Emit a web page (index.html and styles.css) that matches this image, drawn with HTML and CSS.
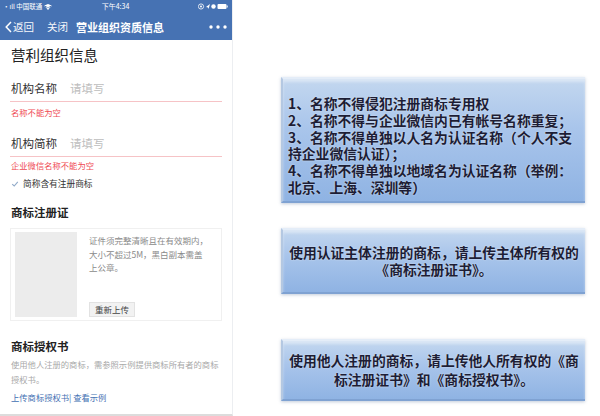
FILE: index.html
```html
<!DOCTYPE html>
<html lang="zh-CN">
<head>
    <meta charset="UTF-8">
    <meta name="viewport" content="width=device-width, initial-scale=1.0">
    <title>营业组织资质信息</title>
<link rel="stylesheet" href="styles.css">
</head>
<body>
    <div class="phone">
        <div class="header">
            <div class="status">
                <span class="carrier">•ıll 中国联通 <svg width="8" height="6" viewBox="0 0 8 6"><path d="M0.5 2 Q4 -1 7.5 2 M1.8 3.3 Q4 1.4 6.2 3.3 M4 5.5 L3 4.4 Q4 3.6 5 4.4 Z" stroke="#fff" stroke-width="0.9" fill="#fff"/></svg></span>
                <span class="clock">下午4:34</span>
                <span class="icons">
                    <svg width="30" height="7" viewBox="0 0 30 7">
                        <circle cx="3" cy="3.5" r="2.6" stroke="#fff" stroke-width="0.8" fill="none"/>
                        <circle cx="3" cy="3.5" r="1" fill="#fff"/>
                        <path d="M8 4 L12 1 L10.5 6 L10 4.5 Z" fill="#fff"/>
                        <circle cx="15.5" cy="3.5" r="2.2" fill="#fff"/>
                        <rect x="19.5" y="1" width="9" height="5" rx="1" fill="#fff"/>
                        <rect x="28.7" y="2.5" width="1" height="2" fill="#fff"/>
                    </svg>
                </span>
            </div>
            <div class="nav">
                <svg class="back" width="7" height="12" viewBox="0 0 7 12"><path d="M6 1 L1.2 6 L6 11" stroke="#fff" stroke-width="1.5" fill="none"/></svg>
                <span class="nav-link">返回</span>
                <span class="nav-link close">关闭</span>
                <span class="nav-title">营业组织资质信息</span>
                <svg class="more" width="18" height="4" viewBox="0 0 18 4"><circle cx="2" cy="2" r="1.7" fill="#fff"/><circle cx="9" cy="2" r="1.7" fill="#fff"/><circle cx="16" cy="2" r="1.7" fill="#fff"/></svg>
            </div>
        </div>

        <div class="page">
            <div class="page-title">营利组织信息</div>

            <div class="field first">
                <span class="field-label">机构名称</span>
                <span class="placeholder">请填写</span>
            </div>
            <div class="error e1">名称不能为空</div>

            <div class="field second">
                <span class="field-label">机构简称</span>
                <span class="placeholder">请填写</span>
            </div>
            <div class="error e2">企业微信名称不能为空</div>

            <div class="check-row">
                <svg width="8" height="8" viewBox="0 0 8 8"><path d="M1.2 4.2 L3.2 6 L6.8 1.8" stroke="#8fa9c8" stroke-width="1.1" fill="none"/></svg>
                <span>简称含有注册商标</span>
            </div>

            <div class="section-title s1">商标注册证</div>
            <div class="upload-card">
                <div class="upload-img"></div>
                <div class="upload-info">
                    <p class="upload-tip">证件须完整清晰且在有效期内，大小不超过5M，黑白副本需盖上公章。</p>
                    <span class="upload-btn">重新上传</span>
                </div>
            </div>

            <div class="section-title s2">商标授权书</div>
            <p class="desc">使用他人注册的商标，需参照示例提供商标所有者的商标授权书。</p>
            <div class="links"><span>上传商标授权书</span>| <span>查看示例</span></div>
        </div>
    </div>

    <div class="notes">
        <div class="note note-list">
            1、名称不得侵犯注册商标专用权<br>
            2、名称不得与企业微信内已有帐号名称重复；<br>
            3、名称不得单独以人名为认证名称（个人不支持企业微信认证）；<br>
            4、名称不得单独以地域名为认证名称（举例：北京、上海、深圳等）
        </div>
        <div class="note note-two">使用认证主体注册的商标，请上传主体所有权的《商标注册证书》。</div>
        <div class="note note-three">使用他人注册的商标，请上传他人所有权的《商标注册证书》和《商标授权书》。</div>
    </div>
</body>
</html>
```

FILE: styles.css
```css
body {
    margin: 0;
    padding: 0;
    width: 600px;
    height: 416px;
    overflow: hidden;
    display: flex;
    background-color: #fff;
    font-family: "Noto Sans CJK SC", "Noto Sans", sans-serif;
}

.phone {
    width: 232px;
    height: 414px;
    flex-shrink: 0;
    background-color: #fff;
    border-right: 1px solid #eceef1;
    border-bottom: 2px solid #dcdcdc;
}

.header {
    height: 40px;
    background-color: #4672b3;
    color: #fff;
}

.status {
    height: 13px;
    display: flex;
    justify-content: space-between;
    align-items: center;
    padding: 0 4px 0 3px;
    font-size: 6.5px;
    line-height: 13px;
}
.status .carrier {
    width: 70px;
    display: flex;
    align-items: center;
    gap: 2px;
}
.status .clock {
    font-size: 7px;
}
.status .icons {
    width: 70px;
    display: flex;
    justify-content: flex-end;
}

.nav {
    height: 27px;
    display: flex;
    align-items: center;
    padding: 0 5px 0 5px;
    font-size: 10.5px;
}
.nav .back {
    margin-right: 1px;
}
.nav-link {
    opacity: 0.95;
}
.nav-link.close {
    margin-left: 13px;
}
.nav-title {
    margin-left: 8px;
    font-size: 11px;
    font-weight: 700;
}
.more {
    margin-left: auto;
}

.page {
    padding: 0 10px;
}

.page-title {
    margin-top: 5px;
    line-height: 20px;
    font-size: 14.5px;
    color: #222;
    padding-left: 1px;
}

.field {
    padding: 15px 0 5px 1px;
    line-height: 16px;
    font-size: 11.5px;
    border-bottom: 1px solid #f6c3c6;
    display: flex;
}
.field.second {
    padding-top: 17px;
}
.field-label {
    width: 59px;
    color: #333;
}
.placeholder {
    color: #bdbdbd;
}

.error {
    font-size: 8.3px;
    line-height: 12px;
    color: #ef4a53;
    padding-left: 1px;
}
.error.e1 {
    margin-top: 4px;
}
.error.e2 {
    margin-top: 2px;
}

.check-row {
    margin-top: 6px;
    line-height: 14px;
    font-size: 8.7px;
    color: #333;
    display: flex;
    align-items: center;
    gap: 4px;
    padding-left: 1px;
}

.section-title {
    line-height: 16px;
    font-size: 11.5px;
    font-weight: 700;
    color: #222;
    padding-left: 1px;
}
.section-title.s1 {
    margin-top: 13px;
}
.section-title.s2 {
    margin-top: 17px;
}

.upload-card {
    margin-top: 8px;
    height: 88px;
    border: 1px solid #f0f0f0;
    padding: 3px 4px 0;
    display: flex;
    gap: 12px;
}
.upload-img {
    width: 62px;
    height: 85px;
    background-color: #ececec;
}
.upload-info {
    flex: 1;
    display: flex;
    flex-direction: column;
    align-items: flex-start;
}
.upload-tip {
    margin: 2px 0 0;
    font-size: 8.5px;
    line-height: 13.5px;
    color: #8a8a8a;
    width: 122px;
}
.upload-btn {
    margin-top: auto;
    margin-bottom: 3px;
    font-size: 8.5px;
    line-height: 13px;
    padding: 0 5px;
    color: #444;
    background-color: #f2f2f2;
    border: 1px solid #e2e2e2;
}

.desc {
    margin: 3px 0 0;
    font-size: 8.3px;
    line-height: 15px;
    color: #a8a8a8;
    padding-left: 1px;
}
.links {
    margin-top: 3px;
    font-size: 8.3px;
    line-height: 14px;
    color: #3f6fb2;
    padding-left: 1px;
}

.notes {
    flex: 1;
    display: flex;
    flex-direction: column;
    padding: 77px 0 0 48px;
}

.note {
    width: 304px;
    box-sizing: border-box;
    background: linear-gradient(#c3d7ef, #a9c5eb 40%, #8fb3e3);
    border-top: 2px solid #e4edf8;
    border-left: 2px solid #b4c8e2;
    border-bottom: 2px solid #7fa2d2;
    box-shadow: 0 1px 3px rgba(120, 140, 170, 0.45), inset 0 3px 3px rgba(255, 255, 255, 0.4);
    color: #1d1d35;
    font-weight: 700;
    font-size: 13.8px;
    text-shadow: 0 0 2px rgba(255, 255, 255, 0.6);
}

.note-list {
    height: 126px;
    padding: 16px 6px 0 5px;
    line-height: 16.8px;
}

.note-two,
.note-three {
    display: flex;
    align-items: center;
    justify-content: center;
    text-align: center;
    padding: 0 6px;
    line-height: 17px;
}

.note-two {
    margin-top: 25px;
    height: 66px;
}

.note-three {
    margin-top: 45px;
    height: 62px;
    line-height: 19px;
}
```
